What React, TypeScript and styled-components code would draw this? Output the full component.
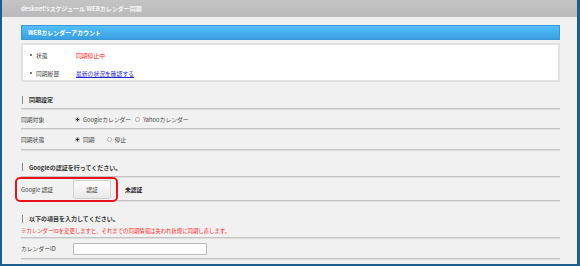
import React from 'react';
import styled, { createGlobalStyle } from 'styled-components';

const Global = createGlobalStyle`
  html, body { margin: 0; padding: 0; background: #ffffff; }
  body { font-family: "Noto Sans CJK JP", "Noto Sans", "Liberation Sans", sans-serif; }
`;

// Frame
const Window = styled.div`
  box-sizing: border-box;
  width: 580px;
  height: 266px;
  background: #f1f1f1;
  border-left: 2px solid #1d5d8e;
  border-right: 3px solid #1d5d8e;
  border-bottom: 2px solid #1d5d8e;
  overflow: hidden;
`;

const TitleBar = styled.div`
  height: 17px;
  display: flex;
  align-items: center;
  padding-left: 19px;
  background: linear-gradient(#c4c4c4, #bababa);
  color: #f8f8f8;
  font-size: 6px;
  font-weight: bold;
`;

const Content = styled.div`
  padding: 8px 17px 0 19px;
`;

// Account panel
const BlueBar = styled.div`
  box-sizing: border-box;
  height: 15px;
  display: flex;
  align-items: center;
  padding-left: 6px;
  background: linear-gradient(#52c0fa, #3b9fe2);
  border: 1px solid #3a98d6;
  color: #ffffff;
  font-size: 6px;
  font-weight: bold;
`;

const InfoBox = styled.div`
  box-sizing: border-box;
  margin-top: 3px;
  height: 39px;
  padding: 1px 0 0 7px;
  background: #ffffff;
  border: 2px solid #e2e2e2;
`;

const InfoRow = styled.div`
  height: 18px;
  display: flex;
  align-items: center;
  font-size: 5.8px;
  color: #444;
`;

const Bullet = styled.span`
  width: 2px;
  height: 2px;
  border-radius: 50%;
  background: #555;
  margin-right: 4px;
`;

const InfoLabel = styled.span`
  width: 40px;
`;

const Value = styled.span<{ $tone?: 'red' | 'link' }>`
  color: ${(p) => (p.$tone === 'red' ? '#ff2a2a' : p.$tone === 'link' ? '#2323cf' : '#444')};
  text-decoration: ${(p) => (p.$tone === 'link' ? 'underline' : 'none')};
`;

// Sections
const Heading = styled.div<{ $top: number; $h: number }>`
  box-sizing: border-box;
  margin-top: ${(p) => p.$top}px;
  height: ${(p) => p.$h}px;
  display: flex;
  align-items: center;
  padding-left: 1px;
  font-size: 6px;
  font-weight: bold;
  color: #333;
  &::before {
    content: '';
    width: 1px;
    height: 8px;
    background: #8a8a8a;
    margin-right: 6px;
  }
`;

const Rule = styled.div`
  height: 1px;
  background: #c4c4c4;
  border-bottom: 1px solid #dedede;
`;

const Row = styled.div<{ $h: number }>`
  position: relative;
  height: ${(p) => p.$h}px;
  display: flex;
  align-items: center;
  font-size: 5.8px;
  color: #444;
`;

const Label = styled.span`
  width: 52px;
`;

const Choice = styled.label<{ $gap?: number }>`
  display: flex;
  align-items: center;
  margin-right: ${(p) => p.$gap ?? 2}px;
`;

const Radio = styled.span<{ $on?: boolean }>`
  box-sizing: border-box;
  width: 5px;
  height: 5px;
  border-radius: 50%;
  border: 1px solid #b0b0b0;
  background: ${(p) => (p.$on ? 'radial-gradient(circle, #333 0 1px, #fff 1.2px)' : '#f8f8f8')};
  margin: 0 3px 0 2px;
`;

const Button = styled.button`
  box-sizing: border-box;
  width: 38px;
  height: 19px;
  padding: 0;
  border: 1px solid #cfcfcf;
  border-radius: 2px;
  background: linear-gradient(#fbfbfb, #e9e9e9);
  font-family: inherit;
  font-size: 5.8px;
  color: #444;
`;

const Status = styled.span`
  margin-left: 14px;
  font-weight: bold;
  color: #222;
`;

const Highlight = styled.div`
  position: absolute;
  left: -6px;
  top: -1px;
  width: 103px;
  height: 25px;
  box-sizing: border-box;
  border: 2px solid #e8141c;
  border-radius: 5px;
`;

const Note = styled.div`
  height: 12px;
  display: flex;
  align-items: center;
  font-size: 5.4px;
  color: #ff3030;
`;

const TextInput = styled.div`
  box-sizing: border-box;
  width: 134px;
  height: 12px;
  background: #ffffff;
  border: 1px solid #bcbcbc;
`;

const App = () => {
  return (
    <>
      <Global />
      <Window>
        <TitleBar>desknet'sスケジュール WEBカレンダー同期</TitleBar>
        <Content>
          <BlueBar>WEBカレンダーアカウント</BlueBar>
          <InfoBox>
            <InfoRow>
              <Bullet />
              <InfoLabel>状態</InfoLabel>
              <Value $tone="red">同期停止中</Value>
            </InfoRow>
            <InfoRow>
              <Bullet />
              <InfoLabel>同期履歴</InfoLabel>
              <Value $tone="link">最新の状況を確認する</Value>
            </InfoRow>
          </InfoBox>

          <Heading $top={9} $h={17}>同期設定</Heading>
          <Rule />
          <Row $h={18}>
            <Label>同期対象</Label>
            <Choice>
              <Radio $on />
              Googleカレンダー
            </Choice>
            <Choice>
              <Radio />
              Yahooカレンダー
            </Choice>
          </Row>
          <Rule />
          <Row $h={19}>
            <Label>同期状態</Label>
            <Choice $gap={10}>
              <Radio $on />
              同期
            </Choice>
            <Choice>
              <Radio />
              停止
            </Choice>
          </Row>
          <Rule />

          <Heading $top={7} $h={18}>Googleの認証を行ってください。</Heading>
          <Rule />
          <Row $h={22}>
            <Label>Google 認証</Label>
            <Button>認証</Button>
            <Status>未認証</Status>
            <Highlight />
          </Row>
          <Rule />

          <Heading $top={10} $h={13}>以下の項目を入力してください。</Heading>
          <Note>※カレンダーIDを変更しますと、それまでの同期情報は失われ新規に同期し直します。</Note>
          <Rule />
          <Row $h={19}>
            <Label>カレンダーID</Label>
            <TextInput />
          </Row>
          <Rule />
        </Content>
      </Window>
    </>
  );
};

export default App;
